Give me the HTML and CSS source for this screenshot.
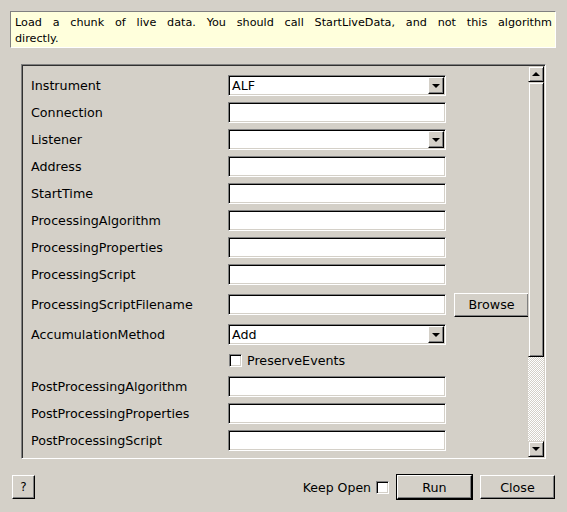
FILE: index.html
```html
<!DOCTYPE html>
<html>
<head>
<meta charset="utf-8">
<link rel="stylesheet" href="styles.css">
</head>
<body>
<div class="window">
  <div class="desc">
    <div class="desc-line">Load a chunk of live data. You should call StartLiveData, and not this algorithm</div>
    <div>directly.</div>
  </div>
  <div class="panel">
    <div class="content">
      <div class="row"><span class="label">Instrument</span><div class="field combo"><span class="val">ALF</span><span class="arrow-btn"><span class="tri-down"></span></span></div></div>
      <div class="row"><span class="label">Connection</span><div class="field"></div></div>
      <div class="row"><span class="label">Listener</span><div class="field combo"><span class="val"></span><span class="arrow-btn"><span class="tri-down"></span></span></div></div>
      <div class="row"><span class="label">Address</span><div class="field"></div></div>
      <div class="row"><span class="label">StartTime</span><div class="field"></div></div>
      <div class="row"><span class="label">ProcessingAlgorithm</span><div class="field"></div></div>
      <div class="row"><span class="label">ProcessingProperties</span><div class="field"></div></div>
      <div class="row"><span class="label">ProcessingScript</span><div class="field"></div></div>
      <div class="row row-tall"><span class="label">ProcessingScriptFilename</span><div class="field"></div><span class="btn browse">Browse</span></div>
      <div class="row"><span class="label">AccumulationMethod</span><div class="field combo"><span class="val">Add</span><span class="arrow-btn"><span class="tri-down"></span></span></div></div>
      <div class="row row-check"><span class="label"></span><span class="checkbox"></span><span class="check-text">PreserveEvents</span></div>
      <div class="row"><span class="label">PostProcessingAlgorithm</span><div class="field"></div></div>
      <div class="row"><span class="label">PostProcessingProperties</span><div class="field"></div></div>
      <div class="row"><span class="label">PostProcessingScript</span><div class="field"></div></div>
    </div>
    <div class="scrollbar">
      <span class="sb-btn"><span class="tri-up"></span></span>
      <span class="sb-thumb"></span>
      <span class="sb-trough"></span>
      <span class="sb-btn"><span class="tri-down"></span></span>
    </div>
  </div>
  <div class="bottom">
    <span class="btn help">?</span>
    <span class="spacer"></span>
    <span class="keep">Keep Open</span>
    <span class="checkbox keep-box"></span>
    <span class="btn-default"><span class="btn run">Run</span></span>
    <span class="btn close">Close</span>
  </div>
</div>
</body>
</html>
```

FILE: styles.css
```css
html, body {
  margin: 0;
  padding: 0;
  background: #d4d0c8;
}

.window {
  width: 567px;
  height: 512px;
  box-sizing: border-box;
  padding-top: 11px;
  font-family: "DejaVu Sans", sans-serif;
  color: #000;
  overflow: hidden;
}

.desc {
  margin: 0 11px 0 10px;
  height: 37px;
  box-sizing: border-box;
  background: #ffffdc;
  border-top: 1px solid #808080;
  border-left: 1px solid #808080;
  border-right: 1px solid #ffffff;
  border-bottom: 1px solid #ffffff;
  padding: 3px 3px 0 4px;
  font-size: 11.2px;
  line-height: 16px;
}

.desc-line {
  text-align: justify;
  text-align-last: justify;
  white-space: nowrap;
}

.panel {
  margin: 16px 0 0 21px;
  width: 525px;
  height: 395px;
  box-sizing: border-box;
  border-top: 1px solid #808080;
  border-left: 1px solid #808080;
  border-right: 1px solid #ffffff;
  border-bottom: 1px solid #ffffff;
  box-shadow: inset 1px 1px 0 #303030, inset -1px -1px 0 #d4d0c8;
  padding: 1px;
  display: flex;
}

.content {
  flex: 1;
  padding: 9px 0 0 8px;
  display: flex;
  flex-direction: column;
  gap: 6px;
  overflow: hidden;
}

.row {
  display: flex;
  align-items: center;
  height: 21px;
  flex: none;
}

.row-tall { height: 27px; }
.row-check { height: 19px; }

.label {
  width: 197px;
  flex: none;
  font-size: 12.7px;
  white-space: nowrap;
}

.field {
  width: 218px;
  height: 21px;
  flex: none;
  box-sizing: border-box;
  background: #fff;
  border-top: 1px solid #808080;
  border-left: 1px solid #808080;
  border-right: 1px solid #ffffff;
  border-bottom: 1px solid #ffffff;
  box-shadow: inset 1px 1px 0 #000, inset -1px -1px 0 #d4d0c8;
  padding: 1px;
  display: flex;
  align-items: center;
}

.val {
  flex: 1;
  padding-left: 2px;
  font-size: 12.7px;
}

.arrow-btn {
  width: 16px;
  align-self: stretch;
  box-sizing: border-box;
  background: #d4d0c8;
  border-top: 1px solid #fff;
  border-left: 1px solid #fff;
  border-right: 1px solid #000;
  border-bottom: 1px solid #000;
  box-shadow: inset -1px -1px 0 #808080;
  display: flex;
  align-items: center;
  justify-content: center;
}

.tri-down {
  width: 0;
  height: 0;
  border-left: 4px solid transparent;
  border-right: 4px solid transparent;
  border-top: 4px solid #000;
}

.tri-up {
  width: 0;
  height: 0;
  border-left: 4px solid transparent;
  border-right: 4px solid transparent;
  border-bottom: 4px solid #000;
}

.btn {
  box-sizing: border-box;
  display: flex;
  align-items: center;
  justify-content: center;
  background: #d4d0c8;
  border-top: 1px solid #fff;
  border-left: 1px solid #fff;
  border-right: 1px solid #000;
  border-bottom: 1px solid #000;
  box-shadow: inset -1px -1px 0 #808080;
  font-size: 12.7px;
  flex: none;
}

.browse {
  width: 75px;
  height: 24px;
  margin-left: 8px;
}

.checkbox {
  width: 13px;
  height: 13px;
  box-sizing: border-box;
  background: #fff;
  border-top: 1px solid #808080;
  border-left: 1px solid #808080;
  border-right: 1px solid #fff;
  border-bottom: 1px solid #fff;
  box-shadow: inset 1px 1px 0 #000, inset -1px -1px 0 #d4d0c8;
  flex: none;
}

.row-check .checkbox { margin-left: 1px; }

.check-text {
  margin-left: 5px;
  font-size: 12.7px;
}

.scrollbar {
  width: 16px;
  flex: none;
  display: flex;
  flex-direction: column;
}

.sb-btn {
  height: 16px;
  flex: none;
  box-sizing: border-box;
  background: #d4d0c8;
  border-top: 1px solid #d4d0c8;
  border-left: 1px solid #d4d0c8;
  border-right: 1px solid #000;
  border-bottom: 1px solid #000;
  box-shadow: inset 1px 1px 0 #fff, inset -1px -1px 0 #808080;
  display: flex;
  align-items: center;
  justify-content: center;
}

.sb-thumb {
  height: 275px;
  flex: none;
  box-sizing: border-box;
  background: #d4d0c8;
  border-top: 1px solid #d4d0c8;
  border-left: 1px solid #d4d0c8;
  border-right: 1px solid #000;
  border-bottom: 1px solid #000;
  box-shadow: inset 1px 1px 0 #fff, inset -1px -1px 0 #808080;
}

.sb-trough {
  flex: 1;
  background: repeating-conic-gradient(#ffffff 0 25%, #d4d0c8 0 50%) 0 0 / 2px 2px;
}

.bottom {
  margin-top: 15px;
  height: 26px;
  padding: 0 12px;
  display: flex;
  align-items: center;
}

.help {
  width: 23px;
  height: 24px;
  font-size: 12px;
}

.spacer { flex: 1; }

.keep {
  font-size: 12.5px;
  margin-right: 5px;
}

.keep-box { margin-right: 7px; }

.btn-default {
  width: 77px;
  height: 26px;
  box-sizing: border-box;
  border: 1px solid #000;
  display: flex;
  flex: none;
}

.run {
  width: 75px;
  height: 24px;
}

.close {
  width: 75px;
  height: 24px;
  margin-left: 7px;
}
```
